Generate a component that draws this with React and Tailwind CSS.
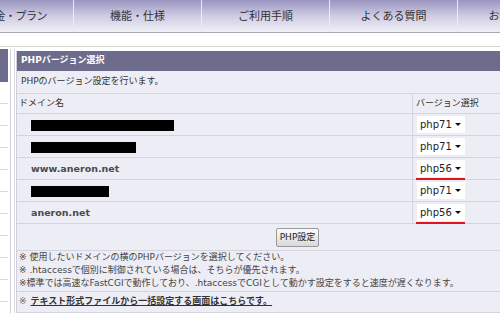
const font = "font-['DejaVu_Sans','Noto_Sans_CJK_JP',sans-serif]";

const navItems = ["料金・プラン", "機能・仕様", "ご利用手順", "よくある質問", "お問い合わせ"];

const rows = [
  { bar: 143, ver: "php71" },
  { bar: 105, ver: "php71" },
  { name: "www.aneron.net", ver: "php56", mark: true },
  { bar: 78, ver: "php71" },
  { name: "aneron.net", ver: "php56", mark: true },
];

function VersionSelect({ ver, mark }) {
  return (
    <div className="relative w-[48px]">
      <div className="flex h-[17px] items-center justify-between bg-white pl-[3px] pr-[4px] text-[10px] text-[#222]">
        <span>{ver}</span>
        <span className="h-0 w-0 border-x-[3px] border-t-[3px] border-x-transparent border-t-[#111]" />
      </div>
      {mark && <div className="absolute -bottom-[3px] left-[-1px] h-[2px] w-[49px] bg-[#e0141c]" />}
    </div>
  );
}

export default function App() {
  return (
    <div className={`h-[317px] w-[500px] overflow-hidden bg-white ${font}`}>
      {/* top nav */}
      <div className="flex h-[33px] border-b border-[#a9a9b3] bg-gradient-to-b from-[#9a95c0] via-[#cfcce3] to-[#f0f0f6]">
        <div className="flex w-[74px] shrink-0 items-center justify-end overflow-hidden border-r border-[#ecebf4] pr-[26px] pt-[2px] text-[11px] text-[#333]">
          <span className="whitespace-nowrap tracking-[-0.5px]">{navItems[0]}</span>
        </div>
        {navItems.slice(1).map((t, i) => (
          <div
            key={i}
            className="flex w-[128px] shrink-0 items-center justify-center border-r border-[#ecebf4] pt-[2px] text-[11px] text-[#333]"
          >
            {t}
          </div>
        ))}
      </div>
      <div className="h-[13px] bg-white" />
      <div className="h-[1px] bg-[#d6d6d6]" />
      <div className="h-[2px] bg-white" />

      <div className="flex">
        {/* left sidebar edge */}
        <div className="w-[8px] shrink-0">
          <div className="h-[33px] bg-[#6e6c8c]" />
          {[0, 1, 2, 3, 4, 5, 6, 7, 8, 9].map((i) => (
            <div key={i} className="h-[22px] border-b border-[#d8d8de] bg-white" />
          ))}
        </div>
        <div className="w-[2px] shrink-0" />
        <div className="w-[1px] shrink-0 bg-[#cfcfd6]" />
        <div className="w-[3px] shrink-0" />
        <div className="w-[1px] shrink-0 bg-[#d8d8de]" />
        <div className="w-[1px] shrink-0" />

        {/* main panel */}
        <div className="flex-1 pt-[2px]">
          <div className="w-[484px] border-l border-[#d0d0da] bg-[#ededf5] text-[9px] text-[#333]">
            <div className="flex h-[20px] items-center bg-[#6e6c8c] pl-[4px] text-[9px] font-bold text-white">
              PHPバージョン選択
            </div>
            <div className="flex h-[23px] items-center border-b border-[#d4d4de] pl-[4px]">
              PHPのバージョン設定を行います。
            </div>
            <div className="flex h-[20px] border-b border-[#d4d4de]">
              <div className="flex w-[396px] items-center border-r border-[#d4d4de] pl-[2px]">ドメイン名</div>
              <div className="flex flex-1 items-center pl-[3px]">バージョン選択</div>
            </div>
            {rows.map((r, i) => (
              <div key={i} className="flex h-[22px] border-b border-[#d4d4de]">
                <div className="flex w-[396px] items-center border-r border-[#d4d4de] pl-[14px] pt-[1px]">
                  {r.name ? (
                    <span className="text-[9.5px] font-bold text-[#4a4a4a]">{r.name}</span>
                  ) : (
                    <div className="h-[11px] bg-black" style={{ width: r.bar }} />
                  )}
                </div>
                <div className="flex flex-1 items-center pl-[4px]">
                  <VersionSelect ver={r.ver} mark={r.mark} />
                </div>
              </div>
            ))}
            <div className="flex h-[27px] items-center justify-center border-b border-[#d4d4de] pl-[78px] pt-[1px]">
              <button className="h-[19px] rounded-[2px] border border-[#9a9a9a] bg-gradient-to-b from-[#fafafa] to-[#d9d9d9] px-[3px] text-[9px] text-[#222]">
                PHP設定
              </button>
            </div>
            <div className="border-b border-[#d4d4de] pb-[1px] pl-[2px] text-[9px] leading-[13px] text-[#444]">
              <p>※ 使用したいドメインの横のPHPバージョンを選択してください。</p>
              <p>※ .htaccessで個別に制御されている場合は、そちらが優先されます。</p>
              <p>※標準では高速なFastCGIで動作しており、.htaccessでCGIとして動かす設定をすると速度が遅くなります。</p>
            </div>
            <div className="flex h-[21px] items-center border-b border-[#d4d4de] pl-[2px] text-[9px] font-bold text-[#333]">
              <span className="mr-[4px] font-normal text-[#666]">※</span>
              <span className="underline">テキスト形式ファイルから一括設定する画面はこちらです。</span>
            </div>
          </div>
        </div>
      </div>
    </div>
  );
}
